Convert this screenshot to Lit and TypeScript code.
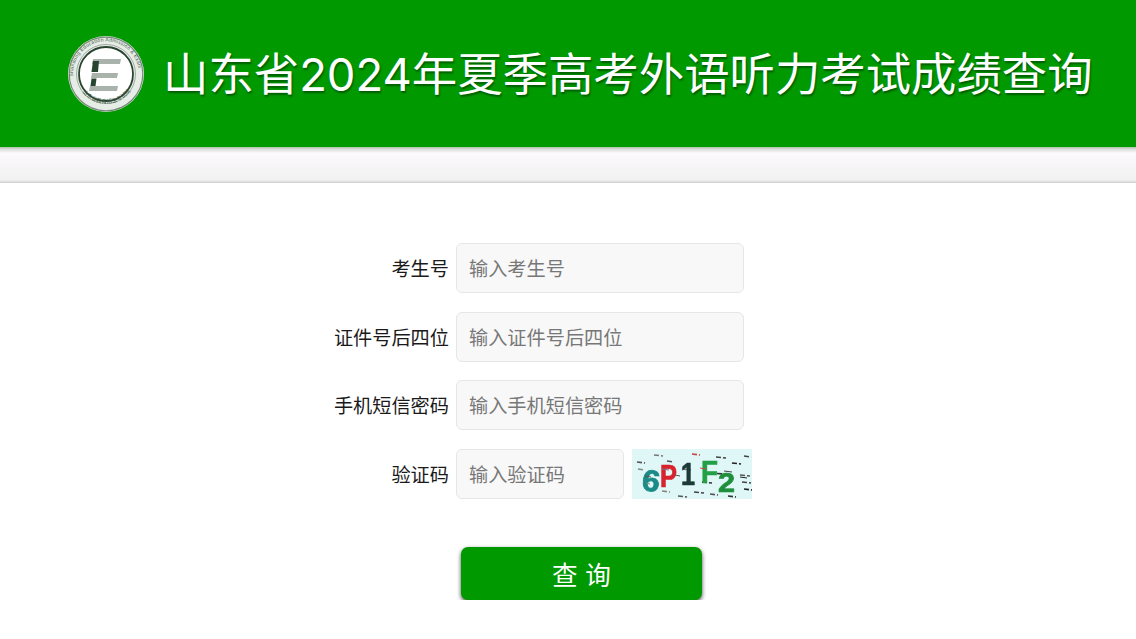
import { LitElement, html, css, svg } from "lit";
import { customElement } from "lit/decorators.js";

const logo = svg`<svg class="logo" viewBox="0 0 78 78" width="78" height="78" aria-hidden="true">
  <defs>
    <path id="ringTop" d="M 6.5 45 A 33 33 0 1 1 71.5 45"></path>
    <path id="ringBottom" d="M 11 50 A 30.5 30.5 0 0 0 67 50"></path>
  </defs>
  <circle cx="39" cy="39" r="38" fill="#e6ece6"></circle>
  <circle cx="39" cy="39" r="36.8" fill="none" stroke="#77897a" stroke-width="1.2"></circle>
  <circle cx="39" cy="39" r="29.5" fill="none" stroke="#8b9a8d" stroke-width="0.8"></circle>
  <circle cx="39" cy="39" r="27" fill="#fff" stroke="#2a4431" stroke-width="1.8"></circle>
  <text font-size="5" fill="#44604a" font-family="Liberation Sans, sans-serif" textLength="100">
    <textPath href="#ringTop" startOffset="3%">Shandong Education Admission &amp; Exam</textPath>
  </text>
  <text font-size="5.5" fill="#35503b" font-family="Noto Sans CJK SC, sans-serif">
    <textPath href="#ringBottom" startOffset="12%">山东省教育招生考试院</textPath>
  </text>
  <path d="M26 24 L54 24 L53 29 L25 29 Z" fill="#a9b3ab"></path>
  <path d="M25 38 L51 38 L50 43 L24 43 Z" fill="#a9b3ab"></path>
  <path d="M23 51 L51 51 L50 56 L22 56 Z" fill="#a9b3ab"></path>
  <path d="M26 26 L32 26 L31 37 L24.5 37 Z" fill="#26452f"></path>
  <path d="M24.5 43.5 L29.5 43.5 L28.5 51 L23.5 51 Z" fill="#26452f"></path>
</svg>`;

const noise: [number, number, number, string][] = [
  [5, 13, 8, "#555"], [22, 6, 9, "#777"], [35, 12, 7, "#555"], [60, 5, 8, "#c44"], [84, 8, 10, "#444"],
  [100, 14, 9, "#222"], [112, 7, 7, "#444"], [6, 20, 6, "#888"], [50, 20, 9, "#777"], [78, 24, 14, "#333"],
  [108, 26, 10, "#555"], [30, 42, 8, "#888"], [46, 47, 9, "#555"], [62, 43, 10, "#444"], [78, 45, 8, "#555"],
  [96, 47, 8, "#333"], [112, 40, 8, "#222"], [110, 33, 9, "#444"], [70, 33, 10, "#333"],
];

const captcha = svg`<svg class="captcha" viewBox="0 0 120 50" width="120" height="50" role="img" aria-label="6P1F2">
  <rect width="120" height="50" fill="#dff7f7"></rect>
  ${noise.map(([x, y, w, c]) => svg`<line x1=${x} y1=${y} x2=${x + w} y2=${y + 1} stroke=${c} stroke-width="1.6" stroke-dasharray="5 2"></line>`)}
  <g font-family="Liberation Sans, sans-serif" font-weight="700" stroke-width="0.7">
    <text x="10" y="42" font-size="30" fill="#1c8a86" stroke="#1c8a86" textLength="18" lengthAdjust="spacingAndGlyphs" transform="rotate(8 18 32)">6</text>
    <text x="28" y="38" font-size="31" fill="#d8232f" stroke="#d8232f" textLength="17" lengthAdjust="spacingAndGlyphs">P</text>
    <text x="49" y="36" font-size="31" fill="#1c3a38" stroke="#1c3a38" textLength="14" lengthAdjust="spacingAndGlyphs">1</text>
    <text x="69" y="34" font-size="31" fill="#23a045" stroke="#23a045" textLength="17" lengthAdjust="spacingAndGlyphs">F</text>
    <text x="86" y="43" font-size="27" fill="#1f8f3c" stroke="#1f8f3c" textLength="17" lengthAdjust="spacingAndGlyphs">2</text>
  </g>
  ${noise.slice(0, 8).map(([x, y, w, c]) => svg`<line x1=${x + 8} y1=${y + 14} x2=${x + w + 6} y2=${y + 15} stroke=${c} stroke-width="1"></line>`)}
</svg>`;

@customElement("app-root")
export class AppRoot extends LitElement {
  static styles = css`
    :host { display: block; background: #fff; font-family: "Noto Sans CJK SC", "Noto Sans", sans-serif; }
    .header {
      height: 147px; background: #009900; display: flex; align-items: center;
      padding: 0 0 0 67px; gap: 18px;
    }
    .logo { flex: none; }
    h1 {
      margin: 2px 0 0; color: #fff; font-size: 45.4px; font-weight: 400; line-height: 1; white-space: nowrap;
      font-family: Inter, "Noto Sans CJK SC", sans-serif;
      text-shadow: 1px 2px 2px rgba(0, 0, 0, .4);
    }
    .subbar {
      height: 36px; box-sizing: border-box;
      background: linear-gradient(#aac2aa 0, #d9dcd9 2px, #fdf9fd 6px, #f3f3f3 28px, #f1f1f1 33px, #cfcfcf 36px);
    }
    form {
      display: grid; grid-template-columns: 449px 288px auto; justify-content: start;
      row-gap: 18.5px; column-gap: 7px; padding-top: 60px; align-items: center;
    }
    label { text-align: right; font-size: 19.2px; color: #1a1a1a; white-space: nowrap; }
    input {
      box-sizing: border-box; width: 100%; height: 50px; padding: 0 12px; border: 1px solid #e6e6e6;
      border-radius: 6px; background: #f8f8f8; font: inherit; font-size: 19.2px; color: #333; outline: none;
    }
    input::placeholder { color: #777; opacity: 1; }
    .full { grid-column: 2 / 4; width: 288px; }
    .code { grid-column: 2 / 4; display: flex; gap: 8px; align-items: center; }
    .code input { width: 168px; flex: none; }
    .captcha { display: block; flex: none; filter: blur(0.45px); }
    .actions { display: flex; padding: 48px 0 0 461px; }
    button {
      width: 241px; height: 53px; border: 0; border-radius: 7px; background: #009900; color: #fff;
      font: inherit; font-size: 25.6px; word-spacing: 2px; box-shadow: 0 2px 4px rgba(0, 0, 0, .7);
    }
  `;

  render() {
    return html`
      <div class="header">${logo}<h1>山东省2024年夏季高考外语听力考试成绩查询</h1></div>
      <div class="subbar"></div>
      <form @submit=${(e: Event) => e.preventDefault()}>
        <label>考生号</label><input class="full" placeholder="输入考生号" />
        <label>证件号后四位</label><input class="full" placeholder="输入证件号后四位" />
        <label>手机短信密码</label><input class="full" placeholder="输入手机短信密码" />
        <label>验证码</label>
        <div class="code"><input placeholder="输入验证码" />${captcha}</div>
      </form>
      <div class="actions"><button type="button">查 询</button></div>
    `;
  }
}
